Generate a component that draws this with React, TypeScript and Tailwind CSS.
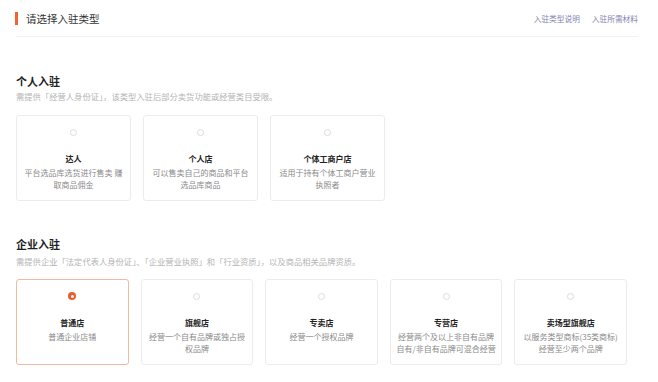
import React from 'react';

interface StoreType {
  name: string;
  lines: string[];
  selected?: boolean;
}

const PERSONAL: StoreType[] = [
  { name: "达人", lines: ["平台选品库选货进行售卖 赚", "取商品佣金"] },
  { name: "个人店", lines: ["可以售卖自己的商品和平台", "选品库商品"] },
  { name: "个体工商户店", lines: ["适用于持有个体工商户营业", "执照者"] },
];

const COMPANY: StoreType[] = [
  { name: "普通店", lines: ["普通企业店铺"], selected: true },
  { name: "旗舰店", lines: ["经营一个自有品牌或独占授", "权品牌"] },
  { name: "专卖店", lines: ["经营一个授权品牌"] },
  { name: "专营店", lines: ["经营两个及以上非自有品牌", "自有/非自有品牌可混合经营"] },
  { name: "卖场型旗舰店", lines: ["以服务类型商标(35类商标)", "经营至少两个品牌"] },
];

function Radio({ checked }: { checked?: boolean }) {
  if (checked) {
    return (
      <span className="flex h-[8px] w-[8px] items-center justify-center rounded-full bg-[#ee5a2a]">
        <span className="h-[3px] w-[3px] rounded-full bg-white" />
      </span>
    );
  }
  return <span className="block h-[7px] w-[7px] rounded-full border border-[#dcdcdc]" />;
}

function Card({ item, className }: { item: StoreType; className?: string }) {
  return (
    <div
      className={`flex h-[86px] flex-col items-center rounded-[3px] border pt-[12px] ${
        item.selected ? "border-[#f2b9a2]" : "border-[#ececec]"
      } ${className ?? ""}`}
    >
      <div className="flex h-[8px] items-center">
        <Radio checked={item.selected} />
      </div>
      <div className="mt-[17px] text-[8px] font-bold leading-[12px] text-[#222]">{item.name}</div>
      <div className="mt-[2px] text-center text-[8px] leading-[12px] text-[#8a8a8a]">
        {item.lines.map((l) => (
          <div key={l} className="whitespace-nowrap">{l}</div>
        ))}
      </div>
    </div>
  );
}

export default function App() {
  return (
    <div className="h-[382px] w-[658px] overflow-hidden bg-white pl-[16px] pr-[20px] font-['Noto_Sans_CJK_SC','Noto_Sans',sans-serif]">
      {/* 顶部标题 */}
      <div className="flex h-[37px] items-center justify-between border-b border-[#f1f1f1] pt-[1px]">
        <div className="flex items-center gap-[8px]">
          <span className="-ml-[1px] h-[13px] w-[3px] bg-[#f0652f]" />
          <span className="text-[10.5px] leading-[14px] text-[#333]">请选择入驻类型</span>
        </div>
        <div className="flex items-center gap-[12px] text-[7.7px] leading-[12px] text-[#7f85b0]">
          <span>入驻类型说明</span>
          <span>入驻所需材料</span>
        </div>
      </div>

      {/* 个人入驻 */}
      <div className="mt-[36px] text-[11px] font-semibold leading-[16px] text-[#1f1f1f]">个人入驻</div>
      <div className="mt-[1px] text-[8.3px] leading-[12px] text-[#b4b4b4]">
        需提供「经营人身份证」，该类型入驻后部分卖货功能或经营类目受限。
      </div>
      <div className="mt-[13px] flex gap-[12px]">
        {PERSONAL.map((p) => (
          <Card key={p.name} item={p} className="w-[115px]" />
        ))}
      </div>

      {/* 企业入驻 */}
      <div className="mt-[35px] text-[11px] font-semibold leading-[16px] text-[#1f1f1f]">企业入驻</div>
      <div className="mt-[3px] text-[8.3px] leading-[12px] text-[#b4b4b4]">
        需提供企业「法定代表人身份证」、「企业营业执照」和「行业资质」，以及商品相关品牌资质。
      </div>
      <div className="mt-[12px] grid w-[611px] grid-cols-5 gap-[12px]">
        {COMPANY.map((c) => (
          <Card key={c.name} item={c} />
        ))}
      </div>
    </div>
  );
}
